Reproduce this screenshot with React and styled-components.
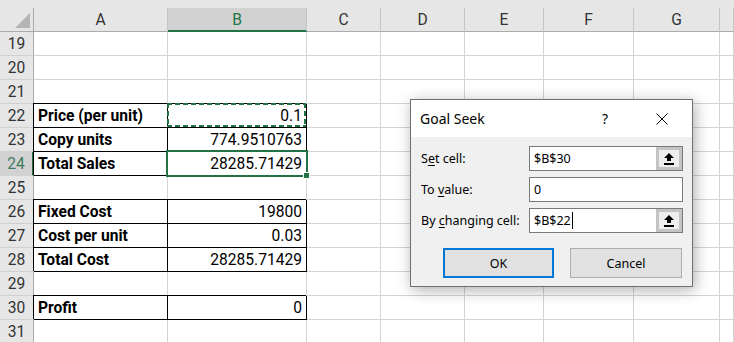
import React from 'react';
import styled, { createGlobalStyle, css } from 'styled-components';

const Global = createGlobalStyle`
  html, body { margin: 0; padding: 0; background: #fff; overflow: hidden; }
  body { width: 734px; height: 342px; }
`;

const Screen = styled.div`
  position: relative;
  width: 734px;
  height: 342px;
  overflow: hidden;
  font-family: Roboto, "Liberation Sans", sans-serif;
`;

const Sheet = styled.div`
  display: grid;
  grid-template-columns: 34px 134px 139px 74px 84px 79px 90px 86px 1fr;
  grid-template-rows: 8px 24px repeat(13, 24px);
  font-size: 15.6px;
`;

const Strip = styled.div`
  grid-column: 1 / -1;
  background: #e6e6e6;
`;

const Corner = styled.div`
  position: relative;
  box-sizing: border-box;
  background: #e6e6e6;
  border-right: 1px solid #ababab;
  border-bottom: 1px solid #ababab;
  &::after {
    content: '';
    position: absolute;
    right: 3px;
    bottom: 3px;
    width: 0;
    height: 0;
    border-style: solid;
    border-width: 0 0 15px 15px;
    border-color: transparent transparent #b4b4b4 transparent;
  }
`;

const ColHead = styled.div`
  box-sizing: border-box;
  display: flex;
  align-items: center;
  justify-content: center;
  background: ${(p) => (p.$active ? '#d2d2d2' : '#e6e6e6')};
  color: ${(p) => (p.$active ? '#217346' : '#333')};
  border-right: 1px solid #c6c6c6;
  border-bottom: ${(p) => (p.$active ? '2px solid #217346' : '1px solid #ababab')};
  padding-top: ${(p) => (p.$active ? '2px' : '1px')};
`;

const RowHead = styled.div`
  box-sizing: border-box;
  text-align: center;
  padding-top: 1px;
  line-height: 22px;
  background: ${(p) => (p.$active ? '#d2d2d2' : '#e6e6e6')};
  color: ${(p) => (p.$active ? '#3f7a5c' : '#333')};
  border-bottom: 1px solid #d0d0d0;
  border-right: ${(p) => (p.$active ? '2px solid #217346' : '1px solid #ababab')};
`;

const marquee = css`
  &::after {
    content: '';
    position: absolute;
    top: -1px;
    left: -1px;
    right: 0;
    bottom: 0;
    background:
      repeating-linear-gradient(90deg, #217346 0 5px, transparent 5px 8px) top left / 100% 2px no-repeat,
      repeating-linear-gradient(90deg, #217346 0 5px, transparent 5px 8px) bottom left / 100% 2px no-repeat,
      repeating-linear-gradient(180deg, #217346 0 5px, transparent 5px 8px) top left / 2px 100% no-repeat,
      repeating-linear-gradient(180deg, #217346 0 5px, transparent 5px 8px) top right / 2px 100% no-repeat;
  }
`;

const selected = css`
  z-index: 1;
  &::after {
    content: '';
    position: absolute;
    top: -2px;
    left: -2px;
    right: -2px;
    bottom: -2px;
    border: 2px solid #217346;
  }
  &::before {
    content: '';
    position: absolute;
    right: -3px;
    bottom: -3px;
    width: 5px;
    height: 5px;
    background: #217346;
    box-shadow: 0 0 0 1px #fff;
    z-index: 2;
  }
`;

const Cell = styled.div`
  position: relative;
  box-sizing: border-box;
  border-right: 1px solid #d4d4d4;
  border-bottom: 1px solid #d4d4d4;
  padding: 1px 4px 0 4px;
  line-height: 22px;
  white-space: nowrap;
  color: #000;
  text-align: ${(p) => (p.$num ? 'right' : 'left')};
  font-weight: ${(p) => (p.$bold ? 700 : 400)};
  ${(p) =>
    p.$boxed &&
    css`
      border-right-color: #000;
      border-bottom-color: #000;
      box-shadow: -1px -1px 0 #000;
    `}
  ${(p) => p.$marquee && marquee}
  ${(p) => p.$selected && selected}
`;

/* Dialog */
const Dialog = styled.div`
  position: absolute;
  left: 410px;
  top: 99px;
  width: 283px;
  height: 188px;
  box-sizing: border-box;
  border: 1px solid #707070;
  background: #f0f0f0;
  box-shadow: 2px 3px 14px rgba(0, 0, 0, 0.32);
  font-family: "Noto Sans", "Open Sans", sans-serif;
  color: #000;
  display: flex;
  flex-direction: column;
`;

const TitleBar = styled.div`
  height: 37px;
  background: #fff;
  display: flex;
  align-items: center;
  padding-left: 9px;
`;

const Title = styled.div`
  font-size: 14px;
  flex: 1;
`;

const TitleButton = styled.div`
  width: ${(p) => p.$w}px;
  height: 100%;
  display: flex;
  align-items: center;
  justify-content: center;
  font-size: 14px;
`;

const Body = styled.div`
  flex: 1;
  padding: 9px 9px 0 9px;
  display: flex;
  flex-direction: column;
`;

const Form = styled.div`
  display: grid;
  grid-template-columns: 1fr 154px;
  row-gap: 6px;
  align-items: center;
`;

const Label = styled.div`
  font-size: 12.5px;
  padding-left: 1px;
  u { text-decoration-thickness: 1px; text-underline-offset: 2px; }
`;

const Field = styled.div`
  display: flex;
  height: 25px;
  box-sizing: border-box;
  border: 1px solid #7a7a7a;
  background: #fff;
`;

const FieldText = styled.div`
  flex: 1;
  padding-left: 4px;
  font-size: 12.5px;
  line-height: 23px;
  display: flex;
  align-items: center;
`;

const Caret = styled.span`
  display: inline-block;
  width: 1px;
  height: 17px;
  background: #000;
  margin-left: 1px;
`;

const PickButton = styled.div`
  width: 26px;
  box-sizing: border-box;
  border: 3px solid #c4c4c4;
  background: #eeeeee;
  display: flex;
  align-items: center;
  justify-content: center;
`;

const Buttons = styled.div`
  display: flex;
  justify-content: flex-end;
  gap: 16px;
  margin-top: 15px;
  padding-right: 1px;
`;

const Button = styled.div`
  width: ${(p) => (p.$primary ? 111 : 112)}px;
  height: 30px;
  box-sizing: border-box;
  background: #e1e1e1;
  border: ${(p) => (p.$primary ? '2px solid #0078d7' : '1px solid #adadad')};
  display: flex;
  align-items: center;
  justify-content: center;
  font-size: 12.5px;
`;

const UpArrow = () => (
  <svg width="10" height="12" viewBox="0 0 10 12">
    <polygon points="5,0 10,5 7,5 7,8 3,8 3,5 0,5" fill="#000" />
    <rect x="0" y="10" width="10" height="2" fill="#000" />
  </svg>
);

const CloseIcon = () => (
  <svg width="12" height="12" viewBox="0 0 12 12">
    <path d="M0.5 0.5 L11.5 11.5 M11.5 0.5 L0.5 11.5" stroke="#000" strokeWidth="1" fill="none" />
  </svg>
);

const cols = ['A', 'B', 'C', 'D', 'E', 'F', 'G', ''];

const data = {
  22: { a: 'Price (per unit)', b: '0.1', boxed: true, marquee: true },
  23: { a: 'Copy units', b: '774.9510763', boxed: true },
  24: { a: 'Total Sales', b: '28285.71429', boxed: true, selected: true },
  26: { a: 'Fixed Cost', b: '19800', boxed: true },
  27: { a: 'Cost per unit', b: '0.03', boxed: true },
  28: { a: 'Total Cost', b: '28285.71429', boxed: true },
  30: { a: 'Profit', b: '0', boxed: true },
};

const rows = Array.from({ length: 13 }, (_, i) => 19 + i);

export default function App() {
  return (
    <Screen>
      <Global />
      <Sheet>
        <Strip />
        <Corner />
        {cols.map((c, i) => (
          <ColHead key={i} $active={c === 'B'}>{c}</ColHead>
        ))}
        {rows.map((r) => {
          const d = data[r] || {};
          return (
            <React.Fragment key={r}>
              <RowHead $active={r === 24}>{r}</RowHead>
              <Cell $bold $boxed={d.boxed}>{d.a}</Cell>
              <Cell $num $boxed={d.boxed} $marquee={d.marquee} $selected={d.selected}>{d.b}</Cell>
              {cols.slice(2).map((c, i) => (
                <Cell key={i} />
              ))}
            </React.Fragment>
          );
        })}
      </Sheet>

      <Dialog>
        <TitleBar>
          <Title>Goal Seek</Title>
          <TitleButton $w={52}>?</TitleButton>
          <TitleButton $w={61}><CloseIcon /></TitleButton>
        </TitleBar>
        <Body>
          <Form>
            <Label>S<u>e</u>t cell:</Label>
            <Field>
              <FieldText>$B$30</FieldText>
              <PickButton><UpArrow /></PickButton>
            </Field>
            <Label>To <u>v</u>alue:</Label>
            <Field>
              <FieldText>0</FieldText>
            </Field>
            <Label>By <u>c</u>hanging cell:</Label>
            <Field>
              <FieldText>$B$22<Caret /></FieldText>
              <PickButton><UpArrow /></PickButton>
            </Field>
          </Form>
          <Buttons>
            <Button $primary>OK</Button>
            <Button>Cancel</Button>
          </Buttons>
        </Body>
      </Dialog>
    </Screen>
  );
}
